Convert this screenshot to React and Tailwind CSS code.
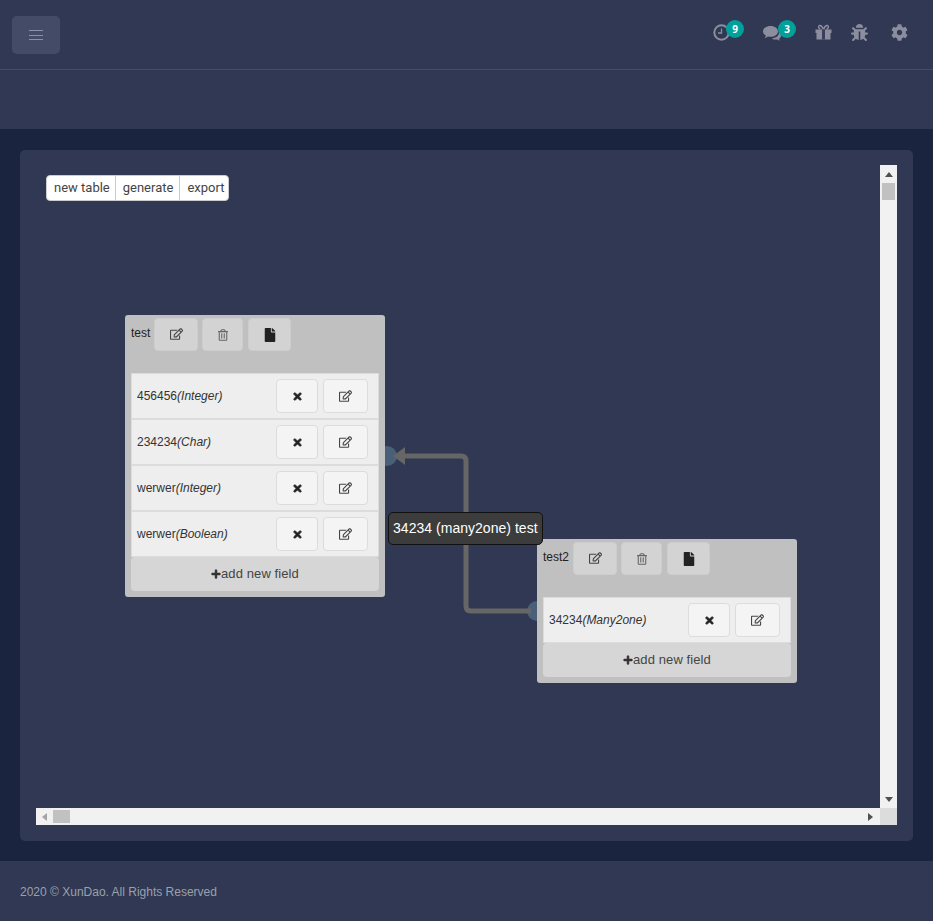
import React from "react";
import { FaBug, FaCog, FaRegEdit, FaRegTrashAlt, FaFile, FaTimes, FaPlus } from "react-icons/fa";

const arial = "font-['Liberation_Sans',Arial,sans-serif]";

function HeadBtn({ children, w }) {
  return (
    <button className={`${w} h-[33px] flex items-center justify-center rounded-[4px] bg-[#d3d3d3] border border-[#cdcdcd] text-[#333]`}>
      {children}
    </button>
  );
}

function FieldRow({ name, type }) {
  return (
    <div className="h-[46px] flex items-center justify-between pl-[5px] pr-[10px] bg-[#eeeeee] border border-[#dcdcdc]">
      <span className="text-[12px] text-[#333] whitespace-nowrap">
        {name}
        <i>({type})</i>
      </span>
      <div className="flex gap-[5px]">
        <button className="w-[42px] h-[34px] flex items-center justify-center rounded-[4px] bg-[#f4f4f4] border border-[#dcdcdc] text-[#222]">
          <FaTimes className="w-[11px] h-[11px]" stroke="currentColor" strokeWidth="36" />
        </button>
        <button className="w-[45px] h-[34px] flex items-center justify-center rounded-[4px] bg-[#f4f4f4] border border-[#dcdcdc] text-[#444]">
          <FaRegEdit className="w-[13px] h-[12px] -mt-px" />
        </button>
      </div>
    </div>
  );
}

function DbTable({ title, fields, pos }) {
  return (
    <div className={`absolute ${pos} w-[260px] bg-[#c0c0c0] rounded-[3px] px-[6px] pb-[6px] pt-[3px] z-10 ${arial}`}>
      <div className="h-[55px] flex items-start">
        <span className="text-[12px] leading-[31px] text-[#222] mr-[4px]">{title}</span>
        <div className="flex">
          <HeadBtn w="w-[44px]"><FaRegEdit className="w-[13px] h-[12px] -mt-px text-[#444]" /></HeadBtn>
          <div className="ml-[4px]">
            <HeadBtn w="w-[41px]"><FaRegTrashAlt className="w-[10px] h-[12px] text-[#666]" /></HeadBtn>
          </div>
          <div className="ml-[5px]">
            <HeadBtn w="w-[43px]"><FaFile className="w-[12px] h-[14px] text-[#222]" /></HeadBtn>
          </div>
        </div>
      </div>
      {fields.map((f, i) => (
        <FieldRow key={i} name={f[0]} type={f[1]} />
      ))}
      <button className="w-full h-[34px] flex items-center justify-center rounded-[4px] bg-[#d6d6d6] text-[13px] text-[#444] tracking-[0.1px]">
        <FaPlus className="w-[10px] h-[10px] -mt-px text-[#333]" stroke="currentColor" strokeWidth="28" />
        add new field
      </button>
    </div>
  );
}

function HeaderIcon({ children, badge, badgeRight, className }) {
  return (
    <div className={`relative text-[#8c8e9f] ${className}`}>
      {children}
      {badge && (
        <span className={`absolute top-[-4px] ${badgeRight} w-[18px] h-[18px] rounded-full bg-[#00a19a] text-white text-[10px] font-bold flex items-center justify-center font-['Open_Sans',sans-serif]`}>
          {badge}
        </span>
      )}
    </div>
  );
}

function ClockIcon() {
  return (
    <svg width="17" height="17" viewBox="0 0 17 17" fill="none" stroke="currentColor" className="block">
      <circle cx="8.5" cy="8.5" r="7.2" strokeWidth="2" />
      <path d="M8.5 4.5V9H5" strokeWidth="1.3" />
    </svg>
  );
}

function ChatIcon() {
  return (
    <svg width="18" height="17" viewBox="0 0 18 17" fill="currentColor" className="block">
      <path d="M7.5 2C11.6 2 15 4.4 15 7.4S11.6 12.8 7.5 12.8C6.6 12.8 5.8 12.7 5 12.5C4 13.4 2.8 14 1.5 14.2C2.2 13.4 2.7 12.5 2.9 11.5C1.1 10.5 0 9 0 7.4 0 4.4 3.4 2 7.5 2Z" />
      <path d="M16 8.6C17.2 9.4 18 10.5 18 11.7C18 12.9 17.2 14 16 14.7C16.2 15.4 16.6 16 17.2 16.5C16.1 16.4 15.2 16 14.4 15.4C13.8 15.5 13.2 15.6 12.6 15.6C11.1 15.6 9.8 15.2 8.8 14.4C12.7 14.3 16.2 12 16 8.6Z" />
    </svg>
  );
}

function GiftIcon() {
  return (
    <svg width="17" height="17" viewBox="0 0 17 17" className="block">
      <path d="M8.5 5.5C7.5 3 6 1.2 4.6 1.5C3 1.9 3.2 4.7 5.5 5.2M8.5 5.5C9.5 3 11 1.2 12.4 1.5C14 1.9 13.8 4.7 11.5 5.2" fill="none" stroke="currentColor" strokeWidth="1.4" />
      <path d="M0.5 5.4H16.5V9H15.5V15.5H1.5V9H0.5Z" fill="currentColor" />
      <rect x="7" y="5.4" width="3" height="10.1" fill="#3f3b5f" />
    </svg>
  );
}

export default function App() {
  return (
    <div className="w-[933px] h-[921px] flex flex-col bg-[#1b243e] overflow-hidden">
      <header className="h-[70px] bg-[#303853] border-b border-[#454c66] flex items-start justify-between pl-[12px] shrink-0">
        <button className="mt-[16px] w-[48px] h-[38px] rounded-[5px] bg-[#444b66] flex flex-col items-center justify-center gap-[3.5px]">
          <span className="block w-[14px] h-px bg-[#8b90a8]" />
          <span className="block w-[14px] h-px bg-[#8b90a8]" />
          <span className="block w-[14px] h-px bg-[#8b90a8]" />
        </button>
        <div className="flex items-center mt-[24px] mr-[25px]">
          <HeaderIcon badge="9" badgeRight="right-[-14px]" className="mr-[33px]"><ClockIcon /></HeaderIcon>
          <HeaderIcon badge="3" badgeRight="right-[-15px]" className="mr-[34px]"><ChatIcon /></HeaderIcon>
          <HeaderIcon className="mr-[19px]"><GiftIcon /></HeaderIcon>
          <HeaderIcon className="mr-[23px]"><FaBug className="w-[17px] h-[17px]" /></HeaderIcon>
          <HeaderIcon><FaCog className="w-[17px] h-[17px]" /></HeaderIcon>
        </div>
      </header>
      <div className="h-[59px] bg-[#303853] shrink-0" />

      <main className="flex-1 px-[20px] pt-[21px] pb-[20px]">
        <div className="h-[691px] rounded-[5px] bg-[#303853] pl-[16px] pr-[16px] pt-[15px]">
          <div className="w-[861px] h-[660px] grid grid-cols-[844px_17px] grid-rows-[643px_17px]">
            <div className="relative overflow-hidden">
              <div className="absolute left-[10px] top-[10px] z-20 flex h-[26px] rounded-[4px] bg-white border border-[#cccccc] text-[13px] text-[#444] font-['Roboto',sans-serif]">
                <span className="pl-[7px] pr-[5px] leading-[24px] border-r border-[#cccccc]">new table</span>
                <span className="pl-[7px] pr-[6px] leading-[24px] border-r border-[#cccccc]">generate</span>
                <span className="pl-[7px] pr-[4px] leading-[24px]">export</span>
              </div>

              <svg className="absolute left-0 top-0 z-0" width="844" height="643" fill="none">
                <circle cx="351" cy="291" r="10" fill="#4a6078" />
                <circle cx="501" cy="446" r="10" fill="#4a6078" />
                <path d="M369 291H425Q430 291 430 296V441Q430 446 435 446H495" stroke="#666666" strokeWidth="5" />
                <path d="M357 291L369 282V300Z" fill="#666666" />
              </svg>

              <DbTable
                title="test"
                pos="left-[89px] top-[150px]"
                fields={[["456456", "Integer"], ["234234", "Char"], ["werwer", "Integer"], ["werwer", "Boolean"]]}
              />
              <DbTable
                title="test2"
                pos="left-[501px] top-[374px]"
                fields={[["34234", "Many2one"]]}
              />

              <div className={`absolute left-[352px] top-[347px] z-20 h-[33px] pl-[4px] pr-[4px] rounded-[5px] bg-[#3c3c3c] border border-[#111] text-white text-[14px] leading-[31px] tracking-[0.03px] whitespace-nowrap ${arial}`}>
                34234 (many2one) test
              </div>
            </div>

            <div className="bg-[#f1f1f1] flex flex-col items-center">
              <svg className="mt-[7px]" width="8" height="5"><path d="M4 0L8 5H0Z" fill="#505050" /></svg>
              <div className="mt-[6px] w-[13px] h-[17px] bg-[#c1c1c1]" />
              <svg className="mt-auto mb-[6px]" width="8" height="5"><path d="M0 0H8L4 5Z" fill="#505050" /></svg>
            </div>
            <div className="bg-[#f1f1f1] flex items-center pl-[6px] pr-[7px]">
              <svg width="5" height="8"><path d="M0 4L5 0V8Z" fill="#a3a3a3" /></svg>
              <div className="ml-[6px] w-[17px] h-[13px] bg-[#c1c1c1]" />
              <svg className="ml-auto" width="5" height="8"><path d="M0 0L5 4L0 8Z" fill="#505050" /></svg>
            </div>
            <div className="bg-[#dcdcdc]" />
          </div>
        </div>
      </main>

      <footer className={`h-[60px] shrink-0 bg-[#303853] flex items-center pl-[20px] pt-[2px] text-[12px] text-[#9ba0ab] ${arial}`}>
        2020 © XunDao. All Rights Reserved
      </footer>
    </div>
  );
}
